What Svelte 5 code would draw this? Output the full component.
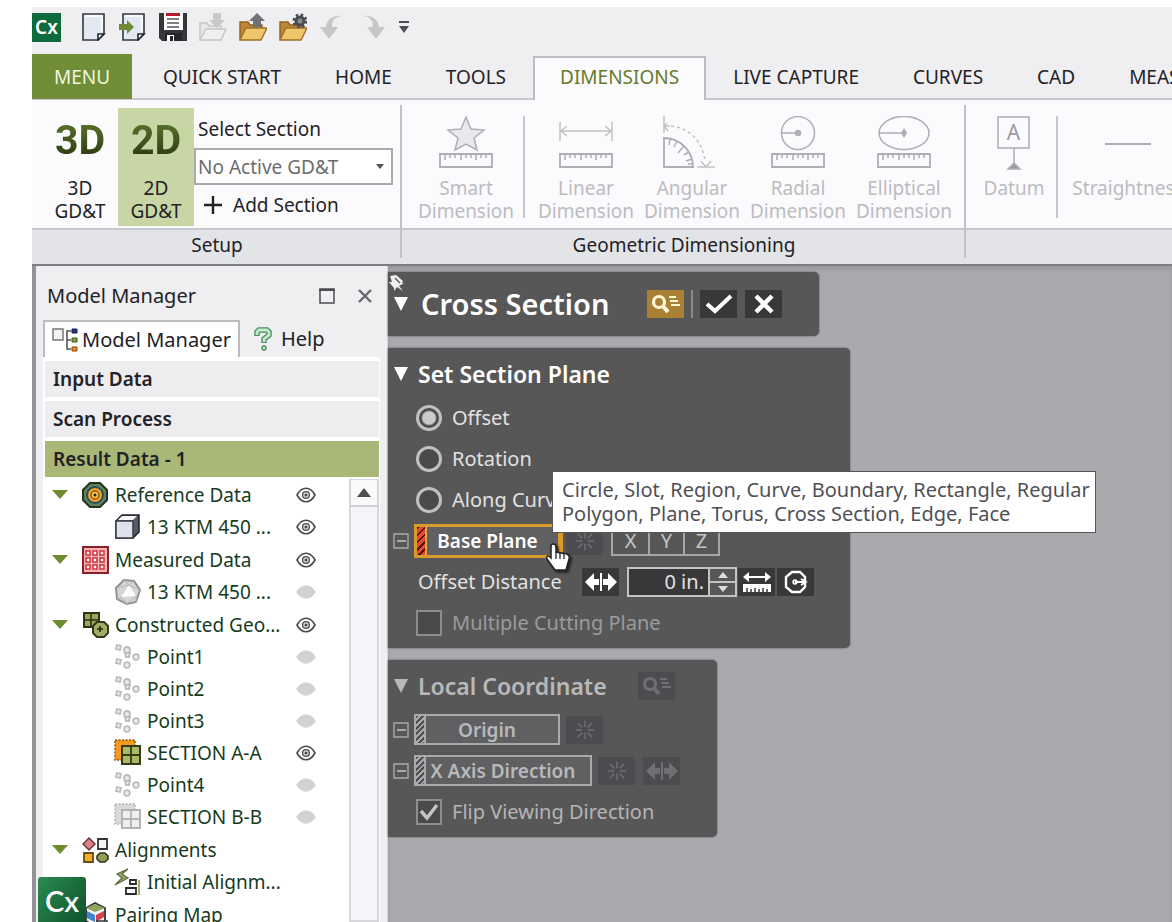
<script lang="ts">
  type TreeItem = { label: string; icon: string; visible?: boolean; parent?: boolean };

  const quickTools = [
    { name: 'New', icon: 'doc' },
    { name: 'Import', icon: 'import' },
    { name: 'Save', icon: 'save' },
    { name: 'Download', icon: 'download' },
    { name: 'Open', icon: 'open' },
    { name: 'Options', icon: 'gear' },
    { name: 'Undo', icon: 'undo' },
    { name: 'Redo', icon: 'redo' },
  ];

  const tabs = ['QUICK START', 'HOME', 'TOOLS', 'DIMENSIONS', 'LIVE CAPTURE', 'CURVES', 'CAD', 'MEASURE'];
  let activeTab = $state('DIMENSIONS');

  const dimensionTools = ['Linear', 'Angular', 'Radial', 'Elliptical'];

  const sections = ['Input Data', 'Scan Process', 'Result Data - 1'];
  let openSection = $state('Result Data - 1');

  let tree = $state<TreeItem[]>([
    { label: 'Reference Data', icon: 'target', visible: true, parent: true },
    { label: '13 KTM 450 ...', icon: 'cube', visible: true },
    { label: 'Measured Data', icon: 'grid', visible: true, parent: true },
    { label: '13 KTM 450 ...', icon: 'mesh', visible: false },
    { label: 'Constructed Geo...', icon: 'geometry', visible: true, parent: true },
    { label: 'Point1', icon: 'points', visible: false },
    { label: 'Point2', icon: 'points', visible: false },
    { label: 'Point3', icon: 'points', visible: false },
    { label: 'SECTION A-A', icon: 'section', visible: true },
    { label: 'Point4', icon: 'points', visible: false },
    { label: 'SECTION B-B', icon: 'section-off', visible: false },
    { label: 'Alignments', icon: 'shapes', parent: true },
    { label: 'Initial Alignm...', icon: 'align' },
    { label: 'Pairing Map', icon: 'pairing', parent: true },
  ]);

  const methods = ['Offset', 'Rotation', 'Along Curve'];
  let method = $state('Offset');
  let distance = $state('0 in.');
  let flipView = $state(true);
</script>

{#snippet quickIcon(name: string)}
  <svg width="28" height="28" viewBox="0 0 28 28" aria-hidden="true">
    {#if name === 'doc' || name === 'import'}
      <path d="M4 1h21v20l-6 6H4z" fill="#e3e9f3" stroke="#35383d" stroke-width="1.6" />
      <path d="M6 3h17v16" fill="none" stroke="#fff" stroke-width="1.5" />
      <path d="M25 21h-6v6z" fill="#fff" stroke="#25282c" stroke-width="1.6" />
      {#if name === 'import'}
        <path d="M0 11h8V7l7 7-7 7v-4H0z" fill="#6f8c35" />
      {/if}
    {:else if name === 'save'}
      <path d="M0 0h28v28H3l-3-3z" fill="#34363b" />
      <path d="M5 0h19v17H5z" fill="#fff" />
      <path d="M7 0h14v3H7z" fill="#b31c2b" />
      <path d="M8 6h12M8 10h12M8 14h12" stroke="#555" stroke-width="1.4" />
      <path d="M6 20h17v8H6z" fill="#24262a" />
      <path d="M8 22h7v6H8z" fill="#fff" />
      <path d="M11 23h3v5h-3z" fill="#24262a" />
    {:else if name === 'download'}
      <path d="M1 27V10h7l2 3h12v3" fill="#e6e5e7" stroke="#c6c6c8" stroke-width="1.5" />
      <path d="M1 27l6-11h20l-5 11z" fill="#efeff0" stroke="#c6c6c8" stroke-width="1.5" />
      <path d="M14 0h8v7h4l-8 8-8-8h4z" fill="#c9c9cb" />
    {:else if name === 'open' || name === 'gear'}
      <path d="M1 27V9h8l2 3h12v5" fill="#bd8638" stroke="#8d5f22" stroke-width="1.4" />
      <path d="M1 27l6-12h21l-6 12z" fill="#eec76a" stroke="#a0702a" stroke-width="1.4" />
      {#if name === 'open'}
        <path d="M14 14V8h-4l8-8 8 8h-4v6z" fill="#707176" />
      {:else}
        <circle cx="21" cy="8" r="4" fill="#8b8c91" stroke="#4a4b50" stroke-width="3" />
        <circle cx="21" cy="8" r="6" fill="none" stroke="#4a4b50" stroke-width="3" stroke-dasharray="2.4 2.3" />
      {/if}
    {:else if name === 'undo'}
      <path d="M24 3C16 3 13 7 13 14h6l-9 12-9-12h6C8 6 14 2 24 3z" fill="#c6c6c8" />
    {:else}
      <path d="M3 3c8 0 11 4 11 11H8l9 12 9-12h-6C19 6 13 2 3 3z" fill="#c6c6c8" />
    {/if}
  </svg>
{/snippet}

{#snippet dimensionIcon(name: string)}
  <svg width="60" height="56" viewBox="0 0 60 56" fill="none" stroke="#afafb3" stroke-width="1.5" aria-hidden="true">
    {#if name === 'Datum'}
      <path d="M14 1h31v31H14zM30 32v17" />
      <text x="29.5" y="24" text-anchor="middle" font-size="21" fill="#9b9b9f" stroke="none">A</text>
      <path d="M24 53l6-6 6 6z" fill="#9b9b9f" />
    {:else if name === 'Straightness'}
      <path d="M7 28h46" stroke-width="2" />
    {:else if name === 'Angular'}
      <path d="M2 0v17M5 7l-3 3 4 5M2 10h6" stroke="#c2c2c5" />
      <path d="M9 10C28 12 41 26 43 45" stroke="#c2c2c5" stroke-dasharray="3 3" />
      <path d="M39 45l5 6 5-6M35 51h18" stroke="#c2c2c5" />
      <path d="M2 22v29h29C31 35 18 22 2 22z" stroke-width="1.8" />
      <path d="M8 23l-1 6M15 25l-3 6M22 30l-6 7M27 36l-5 3M30 43l-6 2M31 48h-5" />
    {:else}
      <path d="M4 38h52v13H4z" stroke-width="1.8" />
      <path d="M9 38v6M14 38v4M19 38v4M25 38v6M30 38v4M35 38v4M40 38v6M45 38v4M50 38v4" />
      {#if name === 'Smart'}
        <path d="M30 1l5 12 13 1-10 8 3 12-11-6-11 6 3-12-10-8 13-1z" fill="#e9e9eb" />
      {:else if name === 'Linear'}
        <path d="M4 6v19M56 6v19M5 15h50M11 10l-6 5 6 5M49 10l6 5-6 5" stroke="#c2c2c5" />
      {:else if name === 'Radial'}
        <circle cx="30" cy="17" r="16.5" />
        <path d="M13 17h17" />
        <circle cx="30" cy="17" r="2.5" fill="#afafb3" />
      {:else}
        <ellipse cx="30" cy="17" rx="25" ry="16.5" />
        <path d="M5 17h24" />
        <path d="M30 12l3 5-3 5-3-5z" fill="#afafb3" stroke="none" />
      {/if}
    {/if}
  </svg>
{/snippet}

{#snippet treeIcon(name: string)}
  <svg width="28" height="28" viewBox="0 0 28 28" aria-hidden="true">
    {#if name === 'target'}
      <path d="M8 2h10l7 7v10l-7 7H8l-7-7V9z" fill="#5e8655" stroke="#263122" stroke-width="2" />
      <circle cx="13" cy="14" r="8" fill="#f3a42c" stroke="#2d4c62" stroke-width="2" />
      <circle cx="13" cy="14" r="4" fill="#ffc24e" stroke="#8e5a16" stroke-width="1.5" />
      <circle cx="13" cy="14" r="1.5" fill="#222" />
    {:else if name === 'cube'}
      <path d="M2 8l6-6h17v17l-6 6H2z" fill="#565a66" stroke="#1e2127" stroke-width="1.5" />
      <path d="M2 8h17v17H2z" fill="#dde2ea" stroke="#3b3e45" stroke-width="1.5" />
      <path d="M4 7l4-4h15l-4 4z" fill="#f7f8fb" />
    {:else if name === 'grid'}
      <path d="M1 1h25v26H1z" fill="#f9b2b6" stroke="#8b2029" stroke-width="2" />
      {#each [4, 11, 18] as gx}
        {#each [5, 12, 19] as gy}
          <rect x={gx} y={gy} width="4" height="4" fill="#fff" stroke="#cf2733" stroke-width="1.4" />
        {/each}
      {/each}
    {:else if name === 'mesh'}
      <path d="M10 2l10 1 6 9-4 12-9 2-10-5-1-11z" fill="#d5d5d6" stroke="#929294" stroke-width="2" />
      <path d="M15 7l7 11-15 1z" fill="#fbfbfb" />
      <path d="M10 2l5 5 5-4M3 10l12-3 11 5M7 19l-4 2M7 19l6 7 9-8 0 6" fill="none" stroke="#b9b9bb" />
    {:else if name === 'geometry'}
      <path d="M2 2h15v14H2z" fill="#98a75b" stroke="#2d3218" stroke-width="2" />
      <path d="M9 2v14M2 9h15" stroke="#2d3218" stroke-width="1.6" />
      <path d="M15 11h7l4 4v7l-4 4h-7l-4-4v-7z" fill="#a1ae65" stroke="#343a1c" stroke-width="2" />
      <path d="M18 15v6M15 18h6" stroke="#23280f" stroke-width="1.6" />
    {:else if name === 'points'}
      <g fill="#ededee" stroke="#bcbcbe" stroke-width="1.8">
        <path d="M3 2l4 1-1 4-4-1zM3 16l4 1-1 4-4-1z" />
        <circle cx="13" cy="7" r="3" />
        <path d="M11 10l5 0-1 4h-3z" />
        <circle cx="22" cy="14" r="2.8" />
        <circle cx="13" cy="22" r="2.8" />
      </g>
    {:else if name === 'section'}
      <path d="M1 1h20v20H1z" fill="#f39a1e" stroke="#91570c" stroke-width="1.5" stroke-dasharray="2 1.5" />
      <path d="M8 7h18v18H8z" fill="#a9b965" stroke="#343b1a" stroke-width="2" />
      <path d="M17 7v18M8 16h18" stroke="#343b1a" stroke-width="1.8" />
    {:else if name === 'section-off'}
      <path d="M1 1h20v20H1z" fill="#d9d9da" stroke="#b5b5b7" stroke-width="1.5" stroke-dasharray="2 1.5" />
      <path d="M8 7h18v18H8z" fill="#efeff0" stroke="#b3b3b5" stroke-width="2" />
      <path d="M17 7v18M8 16h18" stroke="#b3b3b5" stroke-width="1.8" />
    {:else if name === 'shapes'}
      <path d="M7 2l6 6-6 6-6-6z" fill="#d98486" stroke="#6e3638" stroke-width="1.5" />
      <path d="M16 3h9v10h-9z" fill="#f4f4f8" stroke="#333" stroke-width="1.8" />
      <path d="M2 17h9v9H2z" fill="#f4ad27" stroke="#6b4a10" stroke-width="1.8" />
      <path d="M18 17h5l3 3v3l-3 3h-5l-3-3v-3z" fill="#8f9f58" stroke="#2f351b" stroke-width="1.6" />
    {:else if name === 'align'}
      <path d="M14 1L3 6l5 4-7 7 13-7-6-4z" fill="#95a75e" stroke="#5f6a40" stroke-width="1.2" />
      <path d="M16 12h6v4h-6zM12 20h10v6H12z" fill="#fff" stroke="#2c2c2c" stroke-width="1.8" />
      <path d="M25 12v15" stroke="#8a9652" stroke-width="1.6" />
    {:else}
      <path d="M4 7l9-5 10 5v13l-10 6-9-6z" fill="#f2f2f3" stroke="#30343a" stroke-width="1.8" />
      <path d="M4 7l9-4 10 4-10 4z" fill="#8fa25d" />
      <path d="M5 10l8 4v7l-8-4z" fill="#3c86cf" />
      <path d="M14 14l8-4v6l-8 5z" fill="#d9414b" />
      <path d="M15 20h10v7H15z" fill="#fff" stroke="#30343a" stroke-width="1.6" />
    {/if}
  </svg>
{/snippet}

{#snippet burst()}
  <svg width="22" height="22" viewBox="0 0 24 24" stroke="currentColor" stroke-width="1.6" aria-hidden="true">
    <path d="M12 2v7M12 15v7M2 12h7M15 12h7M4 4l5 5M15 15l5 5M4 20l5-5M15 9l5-5" />
  </svg>
{/snippet}

{#snippet flip()}
  <svg width="32" height="18" viewBox="0 0 32 18" fill="currentColor" aria-hidden="true">
    <path d="M0 9l9-9v6h5v6H9v6zM32 9l-9-9v6h-5v6h5v6zM15 0h2v18h-2z" />
  </svg>
{/snippet}

{#snippet search()}
  <svg width="30" height="22" viewBox="0 0 30 22" fill="none" stroke="currentColor" aria-hidden="true">
    <circle cx="8" cy="9" r="5.5" stroke-width="3.2" />
    <path d="M12 13l5 6" stroke-width="4" />
    <path d="M18 4h7M19 8h8M20 12h9" stroke-width="2" />
  </svg>
{/snippet}

{#snippet collapse(label: string)}
  <button class="minus" aria-label={label}>
    <svg width="16" height="16" viewBox="0 0 16 16" fill="none" stroke="currentColor" aria-hidden="true">
      <path d="M1 1h14v14H1z" stroke-width="1.4" /><path d="M4 8h9" stroke-width="2" />
    </svg>
  </button>
{/snippet}

<div class="app">
  <header class="quickbar">
    <span class="logo">Cx</span>
    {#each quickTools as tool}
      <button aria-label={tool.name}>{@render quickIcon(tool.icon)}</button>
    {/each}
    <button class="more" aria-label="Customize toolbar">
      <svg width="10" height="14" viewBox="0 0 10 14" aria-hidden="true">
        <path d="M0 1h10v2H0zM0 6h10l-5 7z" fill="#4e4e52" />
      </svg>
    </button>
  </header>

  <nav class="tabs">
    <button class="menu">MENU</button>
    {#each tabs as tab}
      <button class="tab" class:active={tab === activeTab} onclick={() => (activeTab = tab)}>{tab}</button>
    {/each}
  </nav>

  <div class="ribbon">
    <section class="group setup">
      <div class="body">
        <button class="mode"><b>3D</b><span>3D<br />GD&amp;T</span></button>
        <button class="mode on"><b>2D</b><span>2D<br />GD&amp;T</span></button>
        <div class="picker">
          <label for="active-section">Select Section</label>
          <div class="select-wrap">
            <select id="active-section"><option>No Active GD&amp;T</option></select>
            <svg width="8" height="5" viewBox="0 0 8 5" aria-hidden="true"><path d="M0 0h8L4 5z" fill="#555" /></svg>
          </div>
          <button class="add">
            <svg width="18" height="18" viewBox="0 0 18 18" aria-hidden="true">
              <path d="M9 0v18M0 9h18" stroke="#222" stroke-width="2.4" />
            </svg>
            Add Section
          </button>
        </div>
      </div>
      <h2>Setup</h2>
    </section>

    <section class="group">
      <div class="body dimension">
        <button class="tool" disabled>{@render dimensionIcon('Smart')}<span>Smart<br />Dimension</span></button>
        <span class="rule"></span>
        {#each dimensionTools as tool}
          <button class="tool" disabled>{@render dimensionIcon(tool)}<span>{tool}<br />Dimension</span></button>
        {/each}
      </div>
      <h2>Geometric Dimensioning</h2>
    </section>

    <section class="group tolerance">
      <div class="body">
        <button class="tool narrow" disabled>{@render dimensionIcon('Datum')}<span>Datum</span></button>
        <span class="rule"></span>
        <button class="tool wide" disabled>{@render dimensionIcon('Straightness')}<span>Straightness</span></button>
      </div>
      <h2></h2>
    </section>
  </div>

  <main>
    <aside class="manager">
      <div class="title">
        <h2>Model Manager</h2>
        <button aria-label="Maximize">
          <svg width="16" height="16" viewBox="0 0 16 16" aria-hidden="true">
            <path d="M1 1h14v14H1z" fill="none" stroke="#4c4c50" stroke-width="1.5" /><path d="M0 1h16v2H0z" fill="#4c4c50" />
          </svg>
        </button>
        <button aria-label="Close">
          <svg width="14" height="14" viewBox="0 0 14 14" aria-hidden="true">
            <path d="M1 1l12 12M13 1L1 13" stroke="#66666a" stroke-width="2.4" />
          </svg>
        </button>
      </div>
      <div class="manager-tabs">
        <button class="active">
          <svg width="26" height="24" viewBox="0 0 26 24" aria-hidden="true">
            <path d="M1 1h10v11H1z" fill="#f3f3f4" stroke="#77777a" stroke-width="1.5" />
            <path d="M19 3h-4v18h4M15 12h4" fill="none" stroke="#555" stroke-width="1.6" />
            <path d="M20 1h5v4h-5z" fill="#26348f" stroke="#18205b" />
            <path d="M20 10h5v4h-5z" fill="#7ba331" stroke="#40581a" />
            <path d="M20 19h5v4h-5z" fill="#ee8b24" stroke="#8c430f" />
          </svg>
          Model Manager
        </button>
        <button>
          <svg width="18" height="24" viewBox="0 0 18 24" fill="none" aria-hidden="true">
            <path d="M3 9V5l2-2h8l2 2v3l-5 4v4" stroke="#4e8f62" stroke-width="5.5" />
            <path d="M3 8V5l2-2h8l2 2v3l-5 4v3" stroke="#c5ebce" stroke-width="2.8" />
            <circle cx="10" cy="21" r="2" fill="#c5ebce" stroke="#4e8f62" stroke-width="1.5" />
          </svg>
          Help
        </button>
      </div>
      <div class="sheet">
        {#each sections as section}
          <button class="section" class:open={section === openSection} onclick={() => (openSection = section)}>{section}</button>
        {/each}
        <div class="scroller">
          <ul>
            {#each tree as item}
              <li class:parent={item.parent}>
                {#if item.parent}
                  <svg class="caret" width="16" height="9" viewBox="0 0 16 9" aria-hidden="true">
                    {#if item.label !== 'Pairing Map'}<path d="M0 0h16L8 9z" fill="#6f8c2c" />{/if}
                  </svg>
                {/if}
                {@render treeIcon(item.icon)}
                <span>{item.label}</span>
                {#if item.visible !== undefined}
                  <button aria-label="Toggle visibility" onclick={() => (item.visible = !item.visible)}>
                    <svg width="20" height="16" viewBox="0 0 20 16" aria-hidden="true">
                      {#if item.visible}
                        <path d="M1 8c5-9 13-9 18 0-5 9-13 9-18 0z" fill="#fff" stroke="#4b4b4f" stroke-width="1.6" />
                        <circle cx="10" cy="8" r="3.4" fill="#ddd" stroke="#4b4b4f" stroke-width="1.3" />
                        <circle cx="10" cy="8" r="1.5" fill="#4b4b4f" />
                      {:else}
                        <path d="M0 8c6-9 14-9 20 0-6 9-14 9-20 0z" fill="#d2d2d3" />
                      {/if}
                    </svg>
                  </button>
                {/if}
              </li>
            {/each}
          </ul>
          <div class="scrollbar">
            <button aria-label="Scroll up">
              <svg width="14" height="9" viewBox="0 0 14 9" aria-hidden="true"><path d="M0 9h14L7 0z" fill="#4f4f53" /></svg>
            </button>
          </div>
        </div>
      </div>
      <span class="watermark">Cx</span>
    </aside>

    <div class="canvas">
      <svg class="pin" width="18" height="18" viewBox="0 0 18 18" aria-hidden="true">
        <path d="M2 2l6-1 7 6-1 2 2 0-5 3 4 5-6-4-3 4v-3l-5-6h3z" fill="#f1f1f2" />
        <path d="M7 4l5 5" stroke="#5c5c5f" stroke-width="1.5" />
      </svg>

      <section class="dialog heading">
        <svg class="twist" width="14" height="14" viewBox="0 0 14 14" aria-hidden="true"><path d="M0 0h14L7 14z" fill="currentColor" /></svg>
        <h1>Cross Section</h1>
        <button class="square gold" aria-label="Preview">{@render search()}</button>
        <span class="divider"></span>
        <button class="square" aria-label="Accept">
          <svg width="28" height="20" viewBox="0 0 28 20" fill="none" stroke="#fff" stroke-width="4" aria-hidden="true"><path d="M2 10l8 7L26 2" /></svg>
        </button>
        <button class="square" aria-label="Cancel">
          <svg width="20" height="20" viewBox="0 0 20 20" stroke="#fff" stroke-width="4.5" aria-hidden="true"><path d="M2 2l16 16M18 2L2 18" /></svg>
        </button>
      </section>

      <section class="dialog plane">
        <div class="dialog-title">
          <svg class="twist" width="14" height="14" viewBox="0 0 14 14" aria-hidden="true"><path d="M0 0h14L7 14z" fill="currentColor" /></svg>
          <h2>Set Section Plane</h2>
        </div>
        {#each methods as option}
          <label class="line choice">
            <input type="radio" name="method" value={option} bind:group={method} />
            {option}
          </label>
        {/each}
        <div class="line base">
          {@render collapse('Collapse base plane')}
          <button class="field focus"><i></i><span>Base Plane</span></button>
          <button class="square dim" aria-label="Estimate">{@render burst()}</button>
          <div class="axes"><button>X</button><button>Y</button><button>Z</button></div>
          <div class="tooltip" role="tooltip">
            Circle, Slot, Region, Curve, Boundary, Rectangle, Regular<br />Polygon, Plane, Torus, Cross Section, Edge, Face
          </div>
          <svg class="pointer" width="26" height="28" viewBox="0 0 26 28" aria-hidden="true">
            <path d="M8 1c3 0 3 2 3 3v5l11 2c2 1 3 2 2 5l-3 11H10L2 16c-1-3 1-4 3-2l1 1V4c0-1 0-3 2-3z" fill="#fff" stroke="#222" stroke-width="1.5" />
            <path d="M11 9v7M15 10v6M19 11v5" stroke="#222" stroke-width="1.3" />
          </svg>
        </div>
        <div class="line distance">
          <label for="distance">Offset Distance</label>
          <button class="square" aria-label="Flip direction">{@render flip()}</button>
          <div class="spin">
            <input id="distance" type="text" bind:value={distance} />
            <div>
              <button aria-label="Increase"><svg width="10" height="6" viewBox="0 0 10 6" aria-hidden="true"><path d="M0 6h10L5 0z" fill="#ddd" /></svg></button>
              <button aria-label="Decrease"><svg width="10" height="6" viewBox="0 0 10 6" aria-hidden="true"><path d="M0 0h10L5 6z" fill="#ddd" /></svg></button>
            </div>
          </div>
          <button class="square measure" aria-label="Measure distance">
            <svg width="28" height="22" viewBox="0 0 28 22" aria-hidden="true">
              <path d="M0 6l6-5v4h16V1l6 5-6 5V7H6v4z" fill="#fff" />
              <path d="M0 13h28v8H0z" fill="#fff" />
              <path d="M4 21v-4M8 21v-3M12 21v-4M16 21v-3M20 21v-4M24 21v-3" stroke="#38383a" stroke-width="1.5" />
            </svg>
          </button>
          <button class="square clock" aria-label="History">
            <svg width="24" height="24" viewBox="0 0 24 24" fill="none" stroke="#fff" stroke-width="2.4" aria-hidden="true">
              <path d="M8 2h8l5 5v10l-5 5H8l-6-5V7z" /><path d="M11 12h11M17 9l5 3-5 3" stroke-width="1.8" /><circle cx="11" cy="12" r="1.8" stroke-width="1.8" />
            </svg>
          </button>
        </div>
        <label class="line choice faded">
          <input type="checkbox" disabled />
          Multiple Cutting Plane
        </label>
      </section>

      <section class="dialog local">
        <div class="dialog-title">
          <svg class="twist" width="14" height="14" viewBox="0 0 14 14" aria-hidden="true"><path d="M0 0h14L7 14z" fill="currentColor" /></svg>
          <h2>Local Coordinate</h2>
          <button class="square dim" aria-label="Preview coordinate">{@render search()}</button>
        </div>
        <div class="line">
          {@render collapse('Collapse origin')}
          <button class="field"><i></i><span>Origin</span></button>
          <button class="square dim" aria-label="Estimate origin">{@render burst()}</button>
        </div>
        <div class="line">
          {@render collapse('Collapse axis')}
          <button class="field long"><i></i><span>X Axis Direction</span></button>
          <button class="square dim" aria-label="Estimate axis">{@render burst()}</button>
          <button class="square dim" aria-label="Flip axis">{@render flip()}</button>
        </div>
        <label class="line choice">
          <input type="checkbox" bind:checked={flipView} />
          Flip Viewing Direction
        </label>
      </section>
    </div>
  </main>
</div>

<style>
  :global(body) {
    background: #fff;
  }
  .app {
    box-sizing: border-box;
    display: flex;
    flex-direction: column;
    height: 100vh;
    padding: 7px 0 0 32px;
    overflow: hidden;
    font-family: 'Noto Sans', 'Open Sans', sans-serif;
    font-size: 19px;
    line-height: 24px;
    color: #222226;
  }
  .app :global(svg) {
    display: block;
    flex: none;
  }
  button {
    display: flex;
    align-items: center;
    justify-content: center;
    flex: none;
    padding: 0;
    border: 0;
    background: none;
    color: inherit;
    font: inherit;
    white-space: nowrap;
  }
  h1,
  h2 {
    margin: 0;
    font-size: inherit;
    font-weight: 400;
  }

  .quickbar {
    display: flex;
    align-items: center;
    gap: 12px;
    height: 40px;
    padding-bottom: 7px;
    background: #efeef0;
  }
  .logo {
    width: 29px;
    height: 29px;
    margin-right: 6px;
    background: #0f6a3e;
    color: #fff;
    font-size: 19px;
    font-weight: 600;
    line-height: 28px;
    text-align: center;
  }

  .tabs {
    display: flex;
    align-items: stretch;
    height: 46px;
    background: #efeef0;
    box-shadow: inset 0 -2px #c6c5c9;
  }
  .menu {
    width: 100px;
    margin-bottom: 1px;
    background: #708d38;
    color: #f0f5dc;
  }
  .tab {
    padding: 0 27px;
  }
  .menu + .tab {
    margin-left: 4px;
  }
  .tab.active {
    margin-top: 2px;
    padding: 0 25px 4px;
    border: 1px solid #bdbcc0;
    border-width: 2px 2px 0;
    background: #fbfafc;
    color: #647b2b;
  }

  .ribbon {
    display: flex;
    flex: none;
    height: 164px;
    border-bottom: 2px solid #7d7d82;
    overflow: hidden;
  }
  .group {
    position: relative;
    flex: none;
    display: flex;
    flex-direction: column;
    background: #fbfafd;
  }
  .group::after {
    content: '';
    position: absolute;
    top: 5px;
    right: 0;
    bottom: 6px;
    width: 2px;
    background: #c1c2c7;
  }
  .group h2 {
    height: 24px;
    padding: 3px 0 7px;
    border-top: 2px solid #c6c8cd;
    background: #e3e4e8;
    text-align: center;
  }
  .tolerance {
    flex: 1;
    min-width: 0;
    overflow: hidden;
  }
  .tolerance::after {
    display: none;
  }
  .body {
    box-sizing: border-box;
    display: flex;
    flex: 1;
    padding: 8px 0 2px;
  }
  .setup {
    width: 370px;
  }
  .setup .body {
    padding-left: 10px;
  }
  .mode {
    flex-direction: column;
    justify-content: flex-start;
    width: 76px;
    line-height: 23px;
  }
  .mode.on {
    background: #c8d5a5;
  }
  .mode b {
    margin: 10px 0 15px;
    background: linear-gradient(#5f7a2d, #26330f);
    background-clip: text;
    color: transparent;
    font-family: Roboto, sans-serif;
    font-size: 41px;
    line-height: 44px;
  }
  .picker {
    display: flex;
    flex-direction: column;
    width: 199px;
  }
  .picker label {
    height: 31px;
    padding: 9px 0 0 4px;
  }
  .select-wrap {
    position: relative;
    display: flex;
  }
  .select-wrap svg {
    position: absolute;
    top: 16px;
    right: 9px;
    pointer-events: none;
  }
  select {
    flex: 1;
    height: 37px;
    padding: 0 2px;
    border: 2px solid #a9a9ae;
    border-radius: 0;
    appearance: none;
    background: #fff;
    color: #6c6c70;
    font: inherit;
  }
  .add {
    justify-content: flex-start;
    gap: 11px;
    height: 39px;
    padding-left: 10px;
  }
  .dimension {
    padding: 8px 9px 2px 11px;
  }
  .tool {
    flex-direction: column;
    justify-content: flex-start;
    width: 106px;
    padding-top: 8px;
    color: #bcbcbf;
    line-height: 23px;
  }
  .tool span {
    margin-top: 5px;
  }
  .narrow {
    width: 84px;
    margin-left: 6px;
  }
  .wide {
    width: 140px;
  }
  .rule {
    flex: none;
    width: 2px;
    margin: 8px 8px 8px 4px;
    background: #c6c6ca;
  }
  .tolerance .rule {
    margin: 8px 0;
  }

  main {
    display: flex;
    flex: 1;
    min-height: 0;
    background: #aaa9ae;
  }
  .manager {
    position: relative;
    box-sizing: border-box;
    display: flex;
    flex: none;
    flex-direction: column;
    width: 356px;
    padding: 0 7px 0 7px;
    border-left: 4px solid #929297;
    border-right: 1px solid #d8d8dc;
    background: #efeef0;
  }
  .title {
    display: flex;
    align-items: center;
    gap: 23px;
    height: 54px;
    padding: 6px 8px 0 4px;
    box-sizing: border-box;
    font-size: 20px;
  }
  .title h2 {
    flex: 1;
  }
  .manager-tabs {
    display: flex;
    height: 37px;
    font-size: 20px;
  }
  .manager-tabs button {
    gap: 4px;
    padding: 0 7px;
  }
  .manager-tabs button + button {
    gap: 9px;
    padding-left: 14px;
  }
  .manager-tabs .active {
    border: 2px solid #bcbcc0;
    border-bottom: 0;
    background: #fff;
  }
  .sheet {
    display: flex;
    flex: 1;
    flex-direction: column;
    min-height: 0;
    padding: 4px 1px 0 2px;
    background: #fff;
  }
  .section {
    justify-content: flex-start;
    height: 36px;
    padding-left: 8px;
    background: #edecee;
    font-weight: 600;
  }
  .section + .section {
    margin-top: 4px;
  }
  .section.open {
    background: #a9b777;
  }
  .scroller {
    display: flex;
    flex: 1;
    min-height: 0;
    overflow: hidden;
  }
  ul {
    flex: 1;
    margin: 0;
    padding: 1px 0 0;
    list-style: none;
    color: #163b22;
  }
  li {
    display: flex;
    align-items: center;
    gap: 5px;
    height: 32px;
    padding: 0 33px 0 69px;
  }
  li.parent {
    height: 33px;
    padding-left: 7px;
  }
  .caret {
    margin-right: 9px;
  }
  li span {
    flex: 1;
    white-space: nowrap;
  }
  .scrollbar {
    width: 26px;
    margin-top: 2px;
    border: 2px solid #d7d6da;
    border-top: 0;
    background: #f6f4f9;
  }
  .scrollbar button {
    width: 100%;
    height: 28px;
    border-top: 1px solid #d7d6da;
    border-bottom: 2px solid #d0cfd4;
    background: #fafafa;
  }
  .watermark {
    position: absolute;
    bottom: -3px;
    left: 2px;
    width: 48px;
    height: 48px;
    border-radius: 3px;
    background: linear-gradient(125deg, #2c8a50, #0b522c);
    color: #fff;
    font-family: Lato, sans-serif;
    font-size: 29px;
    font-weight: 600;
    line-height: 48px;
    text-align: center;
  }

  .canvas {
    position: relative;
    flex: 1;
    display: flex;
    flex-direction: column;
    align-items: flex-start;
    gap: 12px;
    min-width: 0;
    padding-top: 6px;
    box-shadow: inset 0 3px 4px #98979d;
  }
  .pin {
    position: absolute;
    top: 8px;
    left: 0;
  }
  .dialog {
    box-sizing: border-box;
    padding: 4px 0 5px 5px;
    border-radius: 0 5px 5px 0;
    background: #575757;
    box-shadow: 0 0 2px #48484a;
    color: #e2e2e2;
    font-size: 20px;
  }
  .twist {
    margin-left: 1px;
    color: #fff;
  }
  .heading {
    display: flex;
    align-items: center;
    width: 431px;
    height: 64px;
    padding: 0 0 0 5px;
  }
  h1 {
    width: 226px;
    margin-left: 13px;
    color: #fff;
    font-size: 29px;
    font-weight: 600;
    line-height: 36px;
  }
  .divider {
    width: 2px;
    height: 28px;
    margin: 0 7px;
    background: #8b8b8b;
  }
  .square {
    width: 37px;
    height: 28px;
    background: #38383a;
    color: #fff;
  }
  .square + .square {
    margin-left: 8px;
  }
  .gold {
    background: #aa8134;
    color: #fff6d5;
  }
  .dim {
    background: #4c4c50;
    color: #6f6f73;
  }
  .plane {
    width: 462px;
  }
  .dialog-title {
    box-sizing: border-box;
    display: flex;
    align-items: center;
    height: 45px;
    padding-bottom: 2px;
  }
  .dialog-title h2 {
    margin-left: 10px;
    color: #fff;
    font-size: 23px;
    font-weight: 600;
  }
  .line {
    display: flex;
    align-items: center;
    height: 41px;
  }
  .choice {
    gap: 10px;
    padding-left: 23px;
  }
  .faded {
    color: #9b9b9b;
  }
  input[type='radio'],
  input[type='checkbox'] {
    box-sizing: border-box;
    width: 26px;
    height: 26px;
    margin: 0;
    border: 3px solid #c0c0c0;
    border-radius: 50%;
    appearance: none;
    background: #4a4a4c;
  }
  input[type='radio']:checked {
    background: radial-gradient(circle, #cbcbcb 6px, #4a4a4c 8px);
  }
  input[type='checkbox'] {
    border: 2px solid #8d8d8f;
    border-radius: 0;
  }
  input[type='checkbox']:checked {
    background: #4a4a4c url("data:image/svg+xml,%3Csvg xmlns='http://www.w3.org/2000/svg' viewBox='0 0 22 22'%3E%3Cpath d='M3 10l6 7L19 4' fill='none' stroke='%23c4c4c4' stroke-width='3.5'/%3E%3C/svg%3E");
  }
  .minus {
    width: 16px;
    color: #aaa;
  }
  .base {
    position: relative;
  }
  .field {
    box-sizing: border-box;
    width: 146px;
    height: 31px;
    margin: 0 6px 0 5px;
    border: 2px solid #a9a9ab;
    background: #606062;
    color: #b9b9bb;
    font-size: 19px;
    font-weight: 600;
  }
  .field i {
    align-self: stretch;
    width: 8px;
    border-right: 2px solid #a9a9ab;
    background: repeating-linear-gradient(135deg, #505052 0 2px, #a9a9ab 2px 4px);
  }
  .field span {
    flex: 1;
    padding-right: 10px;
  }
  .focus {
    width: 149px;
    height: 34px;
    margin-right: 3px;
    border: 3px solid #d99b2b;
    border-right-width: 5px;
    color: #fff;
  }
  .focus i {
    border-color: #e8a53a;
    background: repeating-linear-gradient(135deg, #4a1410 0 2px, #e5482a 2px 5px);
  }
  .long {
    width: 178px;
  }
  .axes {
    display: flex;
    margin-left: 8px;
    border: 2px solid #a6a6a8;
  }
  .axes button {
    width: 35px;
    height: 26px;
    color: #c5c5c7;
  }
  .axes button + button {
    border-left: 2px solid #a6a6a8;
  }
  .tooltip {
    position: absolute;
    top: -49px;
    left: 159px;
    padding: 6px 5px 6px 9px;
    border: 1px solid #55555a;
    background: #fff;
    color: #505056;
    line-height: 24px;
    white-space: nowrap;
  }
  .pointer {
    position: absolute;
    top: 23px;
    left: 152px;
    filter: drop-shadow(2px 2px 1px #222);
  }
  .distance label {
    width: 164px;
    padding-left: 25px;
  }
  .distance .measure {
    margin-left: 1px;
  }
  .distance .clock {
    margin-left: 2px;
  }
  .spin {
    display: flex;
    box-sizing: border-box;
    width: 110px;
    height: 30px;
    margin-left: 8px;
    border: 2px solid #c3c3c5;
    background: #38383a;
  }
  .spin input {
    box-sizing: border-box;
    flex: 1;
    min-width: 0;
    padding: 0 4px 0 0;
    border: 0;
    background: none;
    color: #e2e2e2;
    font: inherit;
    text-align: right;
  }
  .spin div {
    display: grid;
    width: 25px;
    border-left: 2px solid #c3c3c5;
    background: #575757;
  }
  .spin button + button {
    border-top: 2px solid #c3c3c5;
  }
  .local {
    width: 329px;
    color: #b5b5b7;
  }
  .local .twist,
  .local h2 {
    color: #b9b9bb;
  }
  .local h2 {
    width: 220px;
  }
</style>
